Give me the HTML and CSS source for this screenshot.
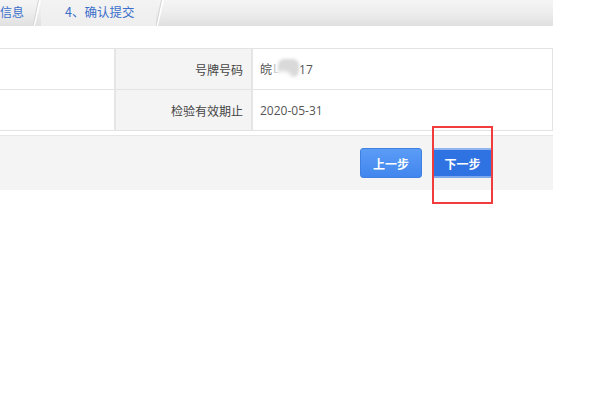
FILE: index.html
```html
<!DOCTYPE html>
<html lang="zh-CN">
<head>
<meta charset="utf-8">
<title>确认提交</title>
<link rel="stylesheet" href="styles.css">
</head>
<body>
<div class="page">
  <div class="steps">
    <div class="step step-first">信息</div>
    <svg class="sep" width="8" height="26" viewBox="0 0 8 26"><polygon points="5,0 8,0 2,26 0,26" fill="#ffffff" opacity="0.9"/><line x1="5.5" y1="0" x2="0" y2="26" stroke="#d2d2d2" stroke-width="1"/></svg>
    <div class="step step-current">4、确认提交</div>
    <svg class="sep" width="8" height="26" viewBox="0 0 8 26"><polygon points="5,0 8,0 2,26 0,26" fill="#ffffff" opacity="0.9"/><line x1="5.5" y1="0" x2="0" y2="26" stroke="#d2d2d2" stroke-width="1"/></svg>
    <div class="step-rest"></div>
  </div>

  <div class="info-grid">
    <div class="cell"></div>
    <div class="cell label">号牌号码</div>
    <div class="cell value">皖<span class="masked"><span class="peek">L</span><span class="blur"></span><span class="blur-white"></span></span>17</div>
    <div class="cell"></div>
    <div class="cell label">检验有效期止</div>
    <div class="cell value">2020-05-31</div>
  </div>

  <div class="footer">
    <button class="btn btn-prev">上一步</button>
    <div class="annot-wrap">
      <button class="btn btn-next">下一步</button>
      <div class="annot"></div>
    </div>
  </div>
</div>
</body>
</html>
```
FILE: styles.css
```css
html, body {
  margin: 0;
  padding: 0;
  background: #ffffff;
}
body {
  min-height: 396px;
  font-family: "Noto Sans CJK SC", "Open Sans", sans-serif;
  font-size: 12px;
  color: #333333;
}
.page {
  width: 553px;
  padding-bottom: 40px;
}
.steps {
  display: flex;
  height: 26px;
  background: linear-gradient(to bottom, #f5f5f5 0%, #ededed 50%, #e0e0e0 100%);
}
.step {
  display: flex;
  align-items: center;
  height: 26px;
  color: #3b6fcb;
  font-size: 12px;
  line-height: 1;
  padding-bottom: 2px;
  box-sizing: border-box;
}
.step-first {
  width: 33px;
  padding-left: 0;
}
.step-current {
  width: 115px;
  padding-left: 24px;
  font-size: 12.5px;
  background: linear-gradient(to bottom, #f3f3f3 0%, #eeeeee 100%);
}
.sep {
  display: block;
  flex: none;
}
.step-rest {
  flex: 1;
}
.info-grid {
  margin-top: 22px;
  display: grid;
  grid-template-columns: 114px 137px 1fr;
  border-top: 1px solid #e3e3e3;
  border-right: 1px solid #e3e3e3;
}
.cell {
  height: 41px;
  box-sizing: border-box;
  border-bottom: 1px solid #e3e3e3;
  display: flex;
  align-items: center;
}
.cell.label {
  border-left: 2px solid #e5e5e5;
  background: #f4f4f4;
  justify-content: flex-end;
  padding-right: 8px;
  color: #444444;
}
.cell.value {
  border-left: 2px solid #e5e5e5;
  padding-left: 7px;
  color: #555555;
  font-family: "Open Sans", "Noto Sans CJK SC", sans-serif;
  font-size: 12px;
}
.masked {
  position: relative;
  display: inline-block;
  width: 27px;
  height: 16px;
}
.peek {
  color: #bbbbbb;
  position: absolute;
  left: 1px;
  top: -1px;
}
.blur {
  position: absolute;
  left: 6px;
  top: -2px;
  width: 21px;
  height: 18px;
  background: #d9d9d9;
  border-radius: 6px;
  filter: blur(1.5px);
}
.blur-white {
  position: absolute;
  left: 2px;
  top: 10px;
  width: 18px;
  height: 14px;
  background: #ffffff;
  border-radius: 50%;
  filter: blur(2px);
}
.footer {
  margin-top: 4px;
  height: 55px;
  box-sizing: border-box;
  border-top: 1px solid #e6e6e6;
  background: #f4f4f4;
  display: flex;
  justify-content: flex-end;
  align-items: flex-start;
  padding: 12px 62px 0 0;
  gap: 12px;
}
.btn {
  height: 30px;
  border: none;
  color: #ffffff;
  font-family: "Noto Sans CJK SC", sans-serif;
  font-size: 12px;
  font-weight: bold;
  padding: 0;
  cursor: pointer;
}
.btn-prev {
  width: 62px;
  border-radius: 3px;
  background: linear-gradient(to bottom, #5b9cf6 0%, #4186ee 100%);
  border: 1px solid #3f7fe0;
}
.annot-wrap {
  position: relative;
  height: 30px;
}
.btn-next {
  display: block;
  width: 57px;
  background: #2f73e2;
  border-top: 2px solid #8fb4ef;
  border-bottom: 2px solid #7ea8ec;
}
.annot {
  position: absolute;
  left: -2px;
  top: -22px;
  width: 61px;
  height: 78px;
  box-sizing: border-box;
  border: 2px solid #f03c3c;
  pointer-events: none;
  z-index: 2;
}
```
